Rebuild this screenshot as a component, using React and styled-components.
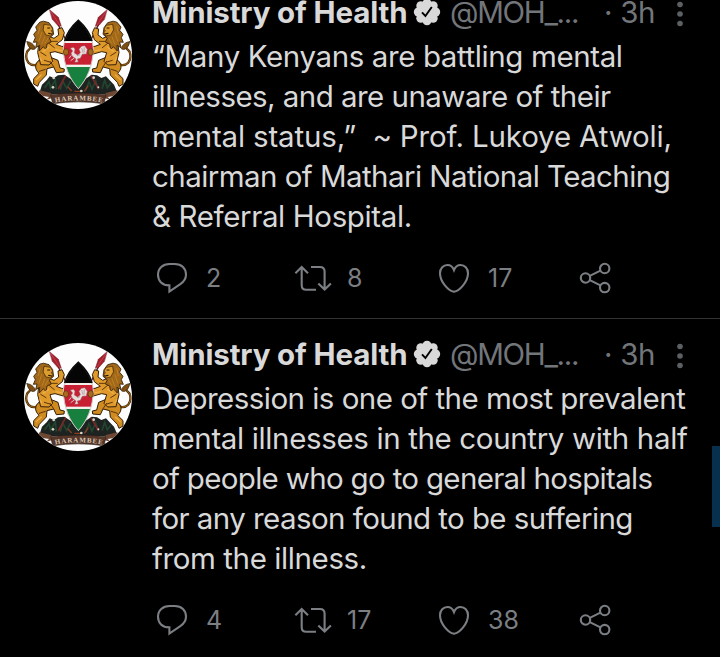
import React from "react";
import styled, { createGlobalStyle } from "styled-components";

const GlobalStyle = createGlobalStyle`
    html,
    body {
        margin: 0;
        background-color: #000;
        overflow: hidden;
    }
`;

const Screen = styled.div`
    position: relative;
    width: 720px;
    height: 657px;
    overflow: hidden;
    background-color: #000;
    color: #d9d9d9;
    font-family: Inter, "Liberation Sans", sans-serif;
`;

// the list is scrolled a little past the top of the first tweet
const Feed = styled.div`
    margin-top: -23px;
    display: flow-root;
`;

const TweetRow = styled.article`
    display: flex;
    box-sizing: border-box;
    height: 342px;
    padding: 0 24px;
    border-bottom: 1px solid #303234;
`;

const Avatar = styled.svg`
    flex: none;
    width: 108px;
    height: 108px;
    margin: 24px 20px 0 0;
`;

const Main = styled.div`
    flex: none;
    width: 548px;
`;

const Header = styled.div`
    display: flex;
    align-items: center;
    height: 43px;
    margin-top: 14px;
    line-height: 43px;
    white-space: nowrap;
`;

const Name = styled.span`
    width: 261px;
    font-size: 29.5px;
    font-weight: 700;
    letter-spacing: -0.14px;
`;

const BadgeIcon = styled.svg`
    width: 28px;
    height: 28px;
    margin-top: -2px;
`;

const Handle = styled.span`
    width: 154px;
    margin-left: 9px;
    font-size: 29.5px;
    letter-spacing: -1.3px;
    color: #72767a;
`;

const Time = styled.span`
    width: 72px;
    font-size: 29.5px;
    letter-spacing: -0.3px;
    color: #72767a;
`;

const MoreIcon = styled.svg`
    width: 8px;
    height: 28px;
    margin-top: 2px;
    fill: #5d6063;
`;

const Body = styled.div`
    margin-top: 2px;
    font-size: 29.5px;
    line-height: 40px;
    white-space: pre;
`;

const Line = styled.span`
    display: block;
    width: max-content;
    letter-spacing: ${({ $spacing }) => $spacing}px;
`;

const Actions = styled.div`
    display: flex;
    align-items: center;
    height: 30px;
    margin-top: 27px;
    padding-left: 4px;
`;

const Action = styled.div`
    display: flex;
    align-items: center;
    width: ${({ $width }) => $width}px;
`;

const ActionIcon = styled.svg`
    flex: none;
    width: ${({ $width }) => $width || 32}px;
    height: 32px;
    fill: none;
    stroke: #7b7f83;
    stroke-width: 2.1;
`;

const Count = styled.span`
    margin-left: ${({ $gap }) => $gap}px;
    font-size: 25px;
    line-height: 32px;
    color: #7b7f83;
`;

const ScrollThumb = styled.div`
    position: absolute;
    right: 0;
    top: 446px;
    width: 8px;
    height: 81px;
    background-color: #06304e;
`;

const SHIELD = "M193 82 C171 102 152 128 148 165 C149 220 168 259 193 287 C218 259 237 220 238 165 C234 128 215 102 193 82 Z";

function Lion() {
    return (
        <g strokeLinejoin="round" strokeLinecap="round">
            {/* spear */}
            <path d="M128 86 L160 150" stroke="#5c1b1c" strokeWidth="4" />
            <path d="M107 50 L133 73 L142 100 L131 97 L115 79 Z" fill="#a81f2e" stroke="#6b1820" strokeWidth="1.5" />
            <path d="M108 52 L138 98" stroke="#cf656b" strokeWidth="1.5" />
            {/* tail */}
            <path d="M70 215 C48 221 32 205 38 180 C40 168 55 171 47 153" fill="none" stroke="#4b2d0c" strokeWidth="7" />
            <path d="M70 215 C48 221 32 205 38 180 C40 168 55 171 47 153" fill="none" stroke="#a06a18" strokeWidth="3" />
            <path d="M39 146 C47 145 63 155 64 167 C57 173 42 168 39 146 Z" fill="#7e4e12" stroke="#35200a" strokeWidth="2" />
            {/* hind legs */}
            <path d="M84 196 C63 206 58 224 75 241 L59 257 L59 273 L71 280 L76 268 L97 246 L99 227 L119 222 L127 239 L150 237 L151 228 L138 225 L132 202 L105 191 Z" fill="#cf8a20" stroke="#2f1d08" strokeWidth="3" />
            {/* body and front paws */}
            <path d="M76 139 L71 179 L80 215 L105 216 L116 205 L108 179 L123 176 L151 184 L164 176 L160 162 L143 160 L127 154 L145 140 L151 119 L144 104 L132 108 L134 126 L120 136 L103 129 Z" fill="#e09a2c" stroke="#35200a" strokeWidth="3" />
            {/* mane */}
            <path d="M77 88 L65 102 L69 112 L59 124 L64 134 L58 148 L69 147 L65 164 L77 157 L76 174 L88 161 L96 170 L99 153 L112 147 L106 135 L119 124 L116 104 L105 89 L90 85 Z" fill="#a1681a" stroke="#301d06" strokeWidth="2.5" />
            <path d="M91 94 L109 97 L116 108 L112 113 L116 119 L111 129 L96 126 L88 112 Z" fill="#dc9c30" stroke="#3d2406" strokeWidth="2" />
            <path d="M101 105 h6 M104 121 l9 2" stroke="#281604" strokeWidth="3.5" />
            <path d="M78 101 L73 122 M83 119 L75 144 M92 132 L84 153 M102 136 L93 151" stroke="#bf8122" strokeWidth="3" />
            <path d="M105 151 L121 164 M80 178 L96 188 M91 202 L107 207 M76 235 L94 229 M119 221 L108 205 M111 145 L130 145" fill="none" stroke="#5d370b" strokeWidth="3" />
            <path d="M88 175 L105 163 M78 194 L83 204 M126 170 L146 174 M82 246 L67 260" stroke="#efb04a" strokeWidth="3.5" />
        </g>
    );
}

function CoatOfArms() {
    return (
        <Avatar viewBox="30 24 324 324">
            <defs>
                <clipPath id="round">
                    <circle cx="192" cy="186" r="162" />
                </clipPath>
                <clipPath id="shield">
                    <path d={SHIELD} />
                </clipPath>
                <path id="motto" d="M123 329 Q193 315 266 329" />
            </defs>
            <g clipPath="url(#round)">
                <rect x="30" y="24" width="324" height="324" fill="#fdfdfd" />
                {/* mountain and plants */}
                <path d="M78 294 L84 275 L98 262 L107 250 L120 255 L132 247 L151 245 L193 272 L233 245 L249 247 L262 255 L276 250 L287 262 L300 275 L308 294 L290 303 L98 303 Z" fill="#1c2320" />
                <path d="M92 284 l13 -18 l5 19 l14 -24 l3 29 M139 290 l7 -26 l12 22 l12 -22 M215 292 l10 -26 l9 22 l11 -25 l7 24 M264 287 l8 -25 l8 22 l10 -13" fill="none" stroke="#23442f" strokeWidth="5" />
                <path d="M155 248 L133 288 M231 248 L254 288" stroke="#7c2626" strokeWidth="5" />
                <path d="M161 281 l12 13 M223 278 l-12 17 M181 295 h23" stroke="#8c3c20" strokeWidth="4" />
                <g fill="#d6d5c8">
                    <circle cx="119" cy="255" r="4" />
                    <circle cx="117" cy="283" r="4" />
                    <circle cx="239" cy="254" r="4" />
                    <circle cx="253" cy="283" r="3" />
                    <circle cx="202" cy="294" r="4" />
                </g>
                <Lion />
                <g transform="translate(386 0) scale(-1 1)">
                    <Lion />
                </g>
                {/* shield */}
                <g clipPath="url(#shield)">
                    <rect x="145" y="80" width="96" height="210" fill="#f3efea" />
                    <rect x="145" y="80" width="96" height="64" fill="#050505" />
                    <rect x="145" y="150" width="96" height="65" fill="#c81f33" />
                    <rect x="145" y="222" width="96" height="70" fill="#17803f" />
                </g>
                <path d={SHIELD} fill="none" stroke="#cfc7c1" strokeWidth="3" />
                <path d="M152 144 C158 121 174 99 193 82 C212 99 228 121 234 144" fill="none" stroke="#0b0b0b" strokeWidth="5" />
                {/* rooster */}
                <path d="M169 166 L178 163 L183 168 L181 180 L191 186 L199 179 L195 169 L202 160 L212 158 L220 169 L217 183 L205 184 L199 196 L190 198 L193 207 L182 208 L186 198 L175 190 L171 181 L176 174 Z" fill="#e6dcdc" stroke="#9b5960" strokeWidth="1.5" />
                <path d="M172 187 l-7 9 M181 195 l-11 8" stroke="#d8c8ca" strokeWidth="3" />
                <path d="M203 165 l4 14 M211 163 l-1 16 M189 188 l9 -3" stroke="#b0868b" strokeWidth="2" />
                <g fill="#a86821" stroke="#51300f" strokeWidth="2">
                    <ellipse cx="156" cy="177" rx="8" ry="10" />
                    <ellipse cx="230" cy="177" rx="8" ry="10" />
                </g>
                {/* scroll */}
                <path d="M76 292 L111 300 L115 315 L96 321 L105 312 L72 307 Z M310 292 L275 300 L271 315 L290 321 L281 312 L314 307 Z" fill="#6e4733" />
                <path d="M110 305 Q193 295 276 305 L270 332 Q193 321 116 332 Z" fill="#553628" stroke="#30201a" strokeWidth="2" />
                <text fontFamily="Liberation Serif, serif" fontSize="21" fontWeight="700" fill="#d6c7ba">
                    <textPath href="#motto" textLength="142" startOffset="1">HARAMBEE</textPath>
                </text>
            </g>
        </Avatar>
    );
}

function VerifiedBadge() {
    return (
        <BadgeIcon viewBox="0 0 28 28">
            <g fill="#d9d9d9">
                <circle cx="14" cy="14" r="10" />
                <circle cx="14" cy="5.3" r="4.5" />
                <circle cx="20.2" cy="7.8" r="4.5" />
                <circle cx="22.7" cy="14" r="4.5" />
                <circle cx="20.2" cy="20.2" r="4.5" />
                <circle cx="14" cy="22.7" r="4.5" />
                <circle cx="7.8" cy="20.2" r="4.5" />
                <circle cx="5.3" cy="14" r="4.5" />
                <circle cx="7.8" cy="7.8" r="4.5" />
            </g>
            <path d="M9 14.4 L12.4 18 L18.8 9" fill="none" stroke="#000" strokeWidth="1.9" />
        </BadgeIcon>
    );
}

function Tweet({ lines, replies, retweets, likes }) {
    return (
        <TweetRow>
            <CoatOfArms />
            <Main>
                <Header>
                    <Name>Ministry of Health</Name>
                    <VerifiedBadge />
                    <Handle>@MOH_...</Handle>
                    <Time>· 3h</Time>
                    <MoreIcon viewBox="0 0 8 28">
                        <circle cx="4" cy="4.5" r="2.8" />
                        <circle cx="4" cy="14" r="2.8" />
                        <circle cx="4" cy="23.5" r="2.8" />
                    </MoreIcon>
                </Header>
                <Body>
                    {lines.map((line) => (
                        <Line key={line.text} $spacing={line.spacing}>{line.text}</Line>
                    ))}
                </Body>
                <Actions>
                    <Action $width={138}>
                        <ActionIcon viewBox="0 0 32 32">
                            <path d="M13.4 23.4 C6.3 23.4 2 19 2 12.8 C2 6.3 6.8 2 13.5 2 H18.8 C25.7 2 30 6.4 30 12.6 C30 17 27.7 20 24.3 22.2 L13.4 29.5 Z" />
                        </ActionIcon>
                        <Count $gap={18}>{replies}</Count>
                    </Action>
                    <Action $width={144}>
                        <ActionIcon $width={38} viewBox="0 0 38 32">
                            <path d="M1.4 11.2 L7.7 5 L14 11.2 M7.7 5 V23.2 Q7.7 27.8 12.3 27.8 H22 M17 5 H26 Q30.6 5 30.6 9.6 V27.5 M24.3 21.5 L30.6 27.6 L36.9 21.5" />
                        </ActionIcon>
                        <Count $gap={15}>{retweets}</Count>
                    </Action>
                    <Action $width={141}>
                        <ActionIcon viewBox="0 0 32 32">
                            <path d="M16 29.8 C10.4 28.8 2 19.8 2 11.3 C2 6.2 5.4 3 9.4 3 C12.5 3 14.9 5.2 16 8.1 C17.1 5.2 19.5 3 22.6 3 C26.6 3 30 6.2 30 11.3 C30 19.8 21.6 28.8 16 29.8 Z" />
                        </ActionIcon>
                        <Count $gap={18}>{likes}</Count>
                    </Action>
                    <ActionIcon viewBox="0 0 32 32">
                        <circle cx="6.5" cy="16" r="4.7" />
                        <circle cx="25.7" cy="6.5" r="4.7" />
                        <circle cx="25.7" cy="25.6" r="4.7" />
                        <path d="M10.8 13.9 L21.4 8.6 M10.8 18.1 L21.4 23.4" />
                    </ActionIcon>
                </Actions>
            </Main>
        </TweetRow>
    );
}

const tweets = [
    {
        id: 1,
        replies: 2,
        retweets: 8,
        likes: 17,
        lines: [
            { text: "“Many Kenyans are battling mental", spacing: -0.39 },
            { text: "illnesses, and are unaware of their", spacing: -0.54 },
            { text: "mental status,”  ~ Prof. Lukoye Atwoli,", spacing: -0.17 },
            { text: "chairman of Mathari National Teaching", spacing: -0.56 },
            { text: "& Referral Hospital.", spacing: -0.38 },
        ],
    },
    {
        id: 2,
        replies: 4,
        retweets: 17,
        likes: 38,
        lines: [
            { text: "Depression is one of the most prevalent", spacing: -0.53 },
            { text: "mental illnesses in the country with half", spacing: -0.36 },
            { text: "of people who go to general hospitals", spacing: -0.68 },
            { text: "for any reason found to be suffering", spacing: -0.57 },
            { text: "from the illness.", spacing: -0.4 },
        ],
    },
];

function App() {
    return (
        <>
            <GlobalStyle />
            <Screen>
                <Feed>
                    {tweets.map((tweet) => (
                        <Tweet key={tweet.id} {...tweet} />
                    ))}
                </Feed>
                <ScrollThumb />
            </Screen>
        </>
    );
}

export default App;
